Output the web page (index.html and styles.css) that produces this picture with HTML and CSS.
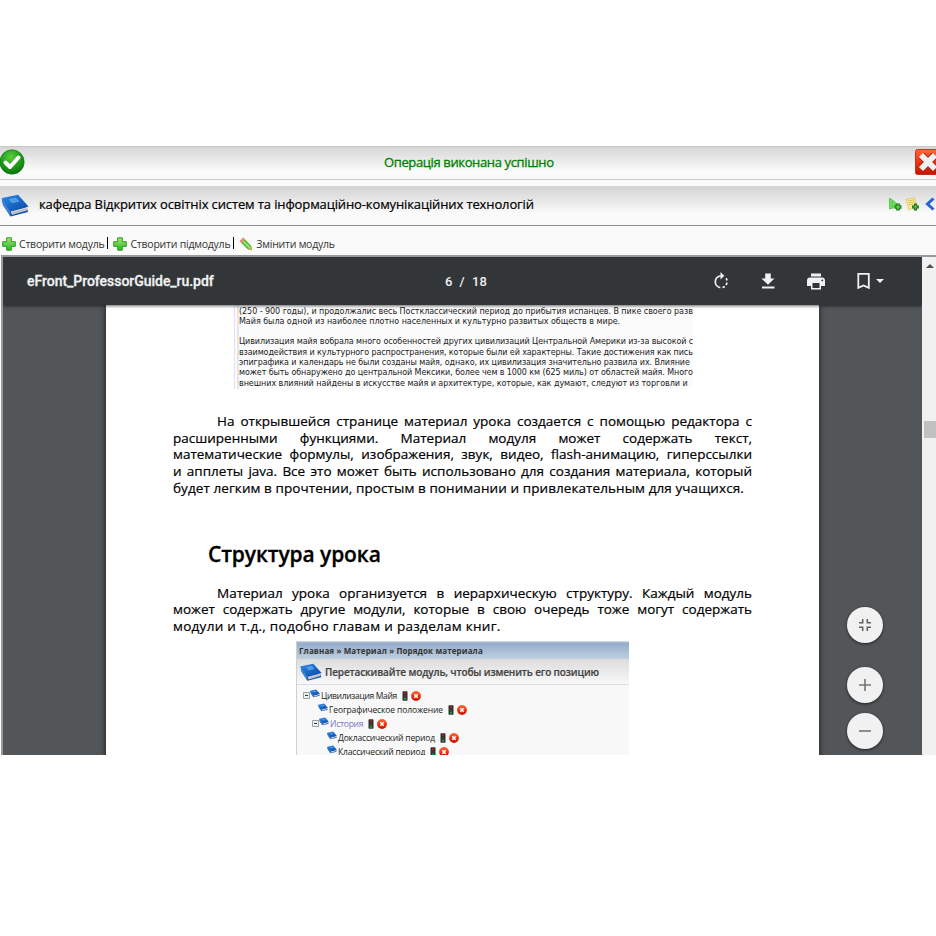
FILE: index.html
```
<!DOCTYPE html>
<html lang="uk">
<head>
    <meta charset="utf-8" />
    <link rel="stylesheet" href="styles.css">
    <title>eFront</title>
</head>

<body>
    <!-- icons -->
    <svg class="sprite">
        <defs>
            <linearGradient id="blue" x1="0" y1="0" x2="1" y2="1">
                <stop offset="0" stop-color="#2d8ce8" />
                <stop offset="1" stop-color="#0646a5" />
            </linearGradient>
            <linearGradient id="green" x1="0" y1="0" x2="0" y2="1">
                <stop offset="0" stop-color="#9be87c" />
                <stop offset="1" stop-color="#2fb51d" />
            </linearGradient>
            <radialGradient id="ball" cx="0.45" cy="0.3" r="0.75">
                <stop offset="0" stop-color="#5fd03f" />
                <stop offset="0.5" stop-color="#22a01b" />
                <stop offset="1" stop-color="#08700b" />
            </radialGradient>
            <linearGradient id="red" x1="0" y1="0" x2="0" y2="1">
                <stop offset="0" stop-color="#ff6a3c" />
                <stop offset="0.5" stop-color="#ee3410" />
                <stop offset="1" stop-color="#c21402" />
            </linearGradient>
        </defs>
        <symbol id="book" viewBox="0 0 28 24">
            <path d="M.8 4.500L2 11l7.500 11.500L27 18l-1-4z" fill="#1150ae" />
            <path d="M9.500 17.500l17-4.500-.8 3.500L11 20.800z" fill="#d4d6da" />
            <path d="M10.500 19.300l15.500-4.300" stroke="#9a9ca2" stroke-width=".7" />
            <path d="M.8 4L17 .8 27.500 12.500 9 17.500z" fill="url(#blue)" />
            <path d="M.8 4L9 17.500l.5 5L2 10.500z" fill="#3a86d8" />
            <path d="M8.500 5.500l6.500-1.300 2.800 3L11 8.700z" fill="#4a9ae4" stroke="#7dbcf0" stroke-width=".5" />
        </symbol>
        <symbol id="plus" viewBox="0 0 14 14">
            <path d="M4.700.8h4.600v3.900h4v4.600h-4v3.900H4.700V9.300h-4V4.700h4z" fill="url(#green)" stroke="#2c9c20" stroke-width="1" />
        </symbol>
        <symbol id="stop" viewBox="0 0 10 10">
            <circle cx="5" cy="5" r="4.900" fill="url(#red)" />
            <path d="M3.300 3.300l3.400 3.400M6.700 3.300L3.300 6.700" stroke="#fff" stroke-width="1.600" />
        </symbol>
        <symbol id="light" viewBox="0 0 6 10">
            <rect x=".5" y=".3" width="5" height="9.400" rx=".8" fill="#30302c" />
            <circle cx="3" cy="2.200" r="1.100" fill="#a5222a" />
            <circle cx="3" cy="5" r="1" fill="#4a4330" />
            <circle cx="3" cy="7.700" r="1.200" fill="#1f9a3c" />
        </symbol>
        <symbol id="minus" viewBox="0 0 7 7">
            <path d="M.5.5h6v6h-6z" fill="#eef1f1" stroke="#94a3a3" />
            <path d="M2 3.500h3" stroke="#333" />
        </symbol>
    </svg>

    <div class="message">
        <svg class="ok" width="26" height="26" viewBox="0 0 26 26">
            <circle cx="13" cy="13" r="12.200" fill="url(#ball)" stroke="#0b6e10" stroke-width=".6" />
            <path d="M6.500 13.500l4.500 4.500 8.500-9.500" fill="none" stroke="#fff" stroke-width="4" stroke-linecap="round" stroke-linejoin="round" />
        </svg>
        <span class="message-text">Операція виконана успішно</span>
        <svg class="close" width="26" height="26" viewBox="0 0 26 26">
            <rect x=".5" y=".5" width="25" height="25" rx="2" fill="url(#red)" stroke="#c43418" />
            <path d="M6.500 6.500l13 13M19.500 6.500l-13 13" stroke="#a31a08" stroke-width="7.500" />
            <path d="M6 6l14 14M20 6L6 20" stroke="#f1f1f1" stroke-width="6" />
        </svg>
    </div>

    <div class="title">
        <svg class="title-book" width="28" height="24"><use href="#book" /></svg>
        <span class="title-text">кафедра Відкритих освітніх систем та інформаційно-комунікаційних технологій</span>
        <svg width="14" height="14" viewBox="0 0 14 14">
            <path d="M1 .8c3 1 8 5 10.500 9L1 12.500z" fill="#58cc48" />
            <path d="M3 3v8M6 5v6" stroke="#8ee67f" />
            <path d="M10 6.500v7M6.500 10h7" stroke="#137a12" stroke-width="3.600" />
            <path d="M10 7.500v5M7.500 10h5" stroke="#7fdd5c" stroke-width="1.200" />
        </svg>
        <svg class="note" width="14" height="14" viewBox="0 0 14 14">
            <path d="M.8 2.500L9.500.8l2 9-8 3C3 9 2.500 5.500.8 2.500z" fill="#f8eb9c" stroke="#dcc65c" stroke-width=".8" />
            <path d="M3 4l6-1.200M3.500 6l6-1.200M4 8l4-.8" stroke="#d2b549" stroke-width=".8" />
            <path d="M10.500 6.500v7M7 10h7" stroke="#1c7c1a" stroke-width="3.200" />
            <path d="M10.500 8v4M8.500 10h4" stroke="#63bd4d" stroke-width="1" />
        </svg>
        <svg class="back" width="10" height="14" viewBox="0 0 10 14">
            <path d="M8.500 1.500L2.500 7l6 5.500" fill="none" stroke="#1f66d0" stroke-width="3" />
        </svg>
    </div>

    <div class="actions">
        <svg width="14" height="14"><use href="#plus" /></svg>
        <span class="act">Створити модуль</span>
        <i class="sep"></i>
        <svg width="14" height="14"><use href="#plus" /></svg>
        <span class="act">Створити підмодуль</span>
        <i class="sep"></i>
        <svg width="14" height="14" viewBox="0 0 14 14">
            <path d="M4.500.8L12.300 9l.8 4.200-4.300-1L.6 4.300z" fill="#4cb932" />
            <path d="M2.800 2.800L11 11" stroke="#9be380" stroke-width="1.800" />
            <path d="M4.300.6L6 2.600 2.700 6 .6 4.200z" fill="#ef8a76" />
            <path d="M12 9l1 4.200-4.200-1z" fill="#d9a55c" />
        </svg>
        <span class="act">Змінити модуль</span>
    </div>

    <div class="frame">
        <div class="viewer">
            <div class="toolbar">
                <span class="file">eFront_ProfessorGuide_ru.pdf</span>
                <span class="pages">6&nbsp; /&nbsp; 18</span>
                <div class="tools">
                    <svg width="18" height="18" viewBox="0 0 18 18" fill="none" stroke="#f1f1f1" stroke-width="1.700">
                        <path d="M8.300 15.700A6 6 0 0 1 8.800 3.800" />
                        <path d="M10.500 15.500a6 6 0 0 0 2.200-1M14 13.100a6 6 0 0 0 1-2.400M15 8.500a6 6 0 0 0-.9-2.200" />
                        <path d="M8.500 0v7.600L12.300 3.800z" fill="#f1f1f1" stroke="none" />
                    </svg>
                    <svg width="24" height="24" viewBox="0 0 24 24" fill="#f1f1f1">
                        <path d="M18.500 9.500h-3.700V4.500H9.200v5H5.500l6.500 6.300zM6 17.500v2h12.500v-2z" />
                    </svg>
                    <svg width="24" height="24" viewBox="0 0 24 24" fill="#f1f1f1">
                        <path d="M18 8.500H6c-1.800 0-3 1.200-3 3V17h4v3.500h10V17h4v-5.500c0-1.800-1.200-3-3-3zM15.500 19h-7v-5h7zm2.800-6.700a.9.900 0 1 1 0-1.800.9.900 0 0 1 0 1.800zM17 4.500H7v3h10z" />
                    </svg>
                    <svg class="mark" width="28" height="18" viewBox="0 0 28 18">
                        <path d="M2.300 1.800h10.500v14L7.500 13.500 2.300 15.800z" fill="none" stroke="#f1f1f1" stroke-width="1.800" />
                        <path d="M20 7h8l-4 4z" fill="#f1f1f1" />
                    </svg>
                </div>
            </div>

            <div class="paper">
                <div class="excerpt">
                    <p class="e1">(250 - 900 годы), и продолжалис весь Постклассический период до прибытия испанцев. В пике своего разв</p>
                    <p class="e2">Майя была одной из наиболее плотно населенных и культурно развитых обществ в мире.</p>
                    <p>&nbsp;</p>
                    <p class="e3">Цивилизация майя вобрала много особенностей других цивилизаций Центральной Америки из-за высокой с</p>
                    <p class="e4">взаимодействия и культурного распространения, которые были ей характерны. Такие достижения как пись</p>
                    <p class="e5">эпиграфика и календарь не были созданы майя, однако, их цивилизация значительно развила их. Влияние</p>
                    <p class="e6">может быть обнаружено до центральной Мексики, более чем в 1000 км (625 миль) от областей майя. Много</p>
                    <p class="e7">внешних влияний найдены в искусстве майя и архитектуре, которые, как думают, следуют из торговли и</p>
                </div>

                <div class="text text1">
                    <p class="first">На открывшейся странице материал урока создается с помощью редактора с</p>
                    <p>расширенными функциями. Материал модуля может содержать текст,</p>
                    <p>математические формулы, изображения, звук, видео, flash-анимацию, гиперссылки</p>
                    <p>и апплеты java. Все это может быть использовано для создания материала, который</p>
                    <p class="last">будет легким в прочтении, простым в понимании и привлекательным для учащихся.</p>
                </div>

                <h2>Структура урока</h2>

                <div class="text text2">
                    <p class="first">Материал урока организуется в иерархическую структуру. Каждый модуль</p>
                    <p>может содержать другие модули, которые в свою очередь тоже могут содержать</p>
                    <p class="last2">модули и т.д., подобно главам и разделам книг.</p>
                </div>

                <div class="shot">
                    <div class="crumbs"><span>Главная » Материал » Порядок материала</span></div>
                    <div class="shot-title">
                        <svg width="22" height="19" viewBox="0 0 28 24"><use href="#book" /></svg>
                        <span>Перетаскивайте модуль, чтобы изменить его позицию</span>
                    </div>
                    <div class="tree">
                        <div class="node">
                            <svg width="7" height="7"><use href="#minus" /></svg>
                            <svg class="mini" width="10" height="9"><use href="#book" /></svg>
                            <span class="n1">Цивилизация Майя</span>
                            <svg class="lamp" width="6" height="10"><use href="#light" /></svg>
                            <svg width="10" height="10"><use href="#stop" /></svg>
                        </div>
                        <div class="node level1">
                            <svg class="mini" width="10" height="9"><use href="#book" /></svg>
                            <span class="n2">Географическое положение</span>
                            <svg class="lamp" width="6" height="10"><use href="#light" /></svg>
                            <svg width="10" height="10"><use href="#stop" /></svg>
                        </div>
                        <div class="node level1b">
                            <svg width="7" height="7"><use href="#minus" /></svg>
                            <svg class="mini" width="10" height="9"><use href="#book" /></svg>
                            <span class="n3">История</span>
                            <svg class="lamp" width="6" height="10"><use href="#light" /></svg>
                            <svg width="10" height="10"><use href="#stop" /></svg>
                        </div>
                        <div class="node level2">
                            <svg class="mini" width="10" height="9"><use href="#book" /></svg>
                            <span class="n4">Доклассический период</span>
                            <svg class="lamp" width="6" height="10"><use href="#light" /></svg>
                            <svg width="10" height="10"><use href="#stop" /></svg>
                        </div>
                        <div class="node level2">
                            <svg class="mini" width="10" height="9"><use href="#book" /></svg>
                            <span class="n5">Классический период</span>
                            <svg class="lamp" width="6" height="10"><use href="#light" /></svg>
                            <svg width="10" height="10"><use href="#stop" /></svg>
                        </div>
                    </div>
                </div>
            </div>

            <!-- zoom buttons over the document -->
            <div class="zoom">
                <div class="round fit">
                    <svg width="12" height="12" viewBox="0 0 12 12" fill="none" stroke="#616161" stroke-width="1.500">
                        <path d="M0 3.700h3.700V0M8.300 0v3.700H12M0 8.300h3.700V12M8.300 12V8.300H12" />
                    </svg>
                </div>
                <div class="round in">
                    <svg width="12" height="12" viewBox="0 0 12 12" stroke="#757575" stroke-width="1.600"><path d="M0 6h12M6 0v12" /></svg>
                </div>
                <div class="round">
                    <svg width="12" height="12" viewBox="0 0 12 12" stroke="#757575" stroke-width="1.600"><path d="M0 6h12" /></svg>
                </div>
            </div>
        </div>
        <div class="scroll">
            <svg width="8" height="4" viewBox="0 0 8 4"><path d="M0 4l4-4 4 4z" fill="#505050" /></svg>
            <div class="thumb"></div>
        </div>
    </div>
</body>
</html>
```
FILE: styles.css
```
* {
    box-sizing: border-box;
}
body {
    margin: 0;
    padding-top: 146px;
    height: 936px;
    overflow: hidden;
    background: #fff;
    font-family: "Open Sans", sans-serif;
}
p, h2 {
    margin: 0;
}
svg {
    flex: none;
    display: block;
}
.sprite {
    position: absolute;
    width: 0;
    height: 0;
}

/* message bar */
.message {
    display: flex;
    align-items: center;
    height: 34px;
    border-top: 1px solid #c8c8c8;
    border-bottom: 1px solid #c8cac8;
    background: linear-gradient(#d6d6d6, #fafafa 75%);
}
.ok {
    margin: -3px 0 0 -1.5px;
}
.message-text {
    margin-left: 359.5px;
    margin-top: -3px;
    white-space: nowrap;
    color: #008000;
    font-size: 13px;
    letter-spacing: -0.37px;
    -webkit-text-stroke: 0.3px #008000;
}
.close {
    margin: -3px -5px 0 auto;
}

/* title bar */
.title {
    display: flex;
    align-items: center;
    height: 46px;
    padding: 0 2px 2px 1px;
    border-top: 6px solid #fafafa;
    border-bottom: 1px solid #8f8f8f;
    background: linear-gradient(#d3d3d3, #fafafa 70%);
}
.title-text {
    flex: 1;
    margin-left: 10px;
    margin-top: -2px;
    white-space: nowrap;
    font-size: 13px;
    letter-spacing: -0.12px;
    color: #000;
    -webkit-text-stroke: 0.2px #000;
}
.title-book {
    margin-top: 2px;
}
.title > svg:not(.title-book) {
    margin-top: -2px;
}
.title .note {
    margin-left: 3px;
}
.title .back {
    margin-left: 6px;
    margin-right: -1px;
}

/* module actions */
.actions {
    display: flex;
    align-items: center;
    height: 29px;
    padding: 6px 0 0 2px;
    background: #fafafa;
    color: #333;
    font-size: 10.5px;
    letter-spacing: -0.23px;
    white-space: nowrap;
}
.act {
    margin-left: 3px;
}
.sep {
    width: 1px;
    height: 12px;
    margin: -2px 5px 0 3px;
    background: #000;
}

/* pdf viewer */
.frame {
    display: flex;
    height: 500px;
    margin-left: 1px;
    border-top: 2px solid #999;
    border-left: 2px solid #989b99;
    overflow: hidden;
}
.viewer {
    position: relative;
    width: 919px;
    background: #525659;
    overflow: hidden;
}
.toolbar {
    position: relative;
    z-index: 2;
    display: flex;
    align-items: center;
    height: 48px;
    padding-left: 24px;
    background: #323639;
    color: #f1f1f1;
    font-family: Roboto, sans-serif;
    font-weight: 500;
    box-shadow: 0 1px 3px rgba(0, 0, 0, 0.6);
}
.file {
    width: 418px;
    font-size: 14px;
    letter-spacing: -0.03px;
    -webkit-text-stroke: 0.3px #f1f1f1;
}
.pages {
    width: 100px;
    font-size: 13px;
    letter-spacing: 0.25px;
}
.tools {
    display: flex;
    align-items: center;
    margin-left: 167px;
}
.tools svg + svg {
    margin-left: 24px;
}
.tools svg:nth-child(2) {
    margin-left: 26px;
}
.tools svg.mark {
    margin-left: 28px;
}
.paper {
    display: flow-root;
    width: 713px;
    height: 460px;
    margin-left: 103px;
    background: #fff;
    box-shadow: 0 0 6px rgba(0, 0, 0, 0.7);
    color: #000;
}
.excerpt {
    width: 459px;
    height: 84px;
    margin-left: 128px;
    padding: 1.5px 0 0 5px;
    overflow: hidden;
    background: linear-gradient(90deg, #e1e1f2 1px, #fbfbfd 1px, #fbfbfd 3px, #d3d3d5 4px, #fbfbfb 5px);
    font-family: "DejaVu Sans", sans-serif;
    font-size: 8px;
    line-height: 10.3px;
    letter-spacing: -0.03px;
    color: #222;
    white-space: nowrap;
}
.e1 {
    letter-spacing: -0.05px;
}
.e3 {
    letter-spacing: -0.09px;
}
.e4 {
    letter-spacing: -0.1px;
}
.e5, .e6 {
    letter-spacing: -0.09px;
}
.e7 {
    letter-spacing: -0.04px;
}
.text {
    width: 579px;
    margin-left: 67px;
    font-size: 13.5px;
    line-height: 16.7px;
    white-space: nowrap;
    -webkit-text-stroke: 0.2px #000;
}
.text p {
    text-align-last: justify;
}
.text p.last, .text p.last2 {
    text-align-last: left;
}
.last {
    letter-spacing: 0.08px;
}
.last2 {
    letter-spacing: 0.28px;
}
.text .first {
    padding-left: 44px;
}
.text1 {
    margin-top: 24px;
}
h2 {
    margin: 41px 0 0 102px;
    font-size: 21px;
    line-height: 32px;
    font-weight: 600;
    letter-spacing: -0.1px;
    white-space: nowrap;
    -webkit-text-stroke: 0.3px #000;
}
.text2 {
    margin-top: 15px;
}

/* screenshot inside the document */
.shot {
    width: 333px;
    height: 120px;
    margin: 6px 0 0 190px;
    overflow: hidden;
    border-left: 1px solid #ccd0d8;
    background: #f8f8f8;
    white-space: nowrap;
}
.crumbs {
    height: 18px;
    padding-left: 2px;
    background: linear-gradient(#dde3e8 0, #94adcc 2px, #bfcfdf);
    font-size: 8px;
    line-height: 20px;
    font-weight: 700;
    letter-spacing: 0.12px;
    color: #333;
}
.shot-title {
    display: flex;
    align-items: center;
    height: 26px;
    padding: 2px 0 0 3px;
    border-bottom: 1px solid #dcdce6;
    background: linear-gradient(#dcdcdc, #f8f8f8);
    font-size: 10px;
    font-weight: 600;
    letter-spacing: -0.14px;
    color: #444;
    -webkit-text-stroke: 0.2px #444;
}
.shot-title span {
    margin-left: 3px;
}
.tree {
    padding: 4px 0 0 6px;
    font-size: 8.5px;
    line-height: 12px;
    color: #222;
}
.node {
    display: flex;
    align-items: center;
    height: 14px;
}
.mini {
    margin: -5px 1px 0 0;
}
.level1 {
    padding-left: 15px;
}
.level1b {
    padding-left: 9px;
}
.level2 {
    padding-left: 24px;
}
.lamp {
    margin: 0 3px 0 5px;
}
.n1 {
    letter-spacing: -0.33px;
}
.n2 {
    letter-spacing: -0.12px;
}
.n3 {
    letter-spacing: -0.25px;
    color: #7777cc;
}
.n4, .n5 {
    letter-spacing: -0.17px;
}

.zoom {
    position: absolute;
    z-index: 3;
    left: 844px;
    top: 350px;
}
.round {
    display: flex;
    align-items: center;
    justify-content: center;
    width: 36px;
    height: 36px;
    border-radius: 50%;
    background: #f1f1f1;
    box-shadow: 0 1px 3px rgba(0, 0, 0, 0.6);
}
.fit {
    margin-bottom: 24px;
}
.in {
    margin-bottom: 10px;
}
.scroll {
    display: flex;
    flex-direction: column;
    align-items: center;
    flex: 1;
    padding-top: 7px;
    background: #f1f1f1;
}
.scroll svg {
    margin-left: 2px;
}
.thumb {
    width: 12px;
    height: 17px;
    margin: 153px 0 0 2px;
    background: #c1c1c1;
}
```
